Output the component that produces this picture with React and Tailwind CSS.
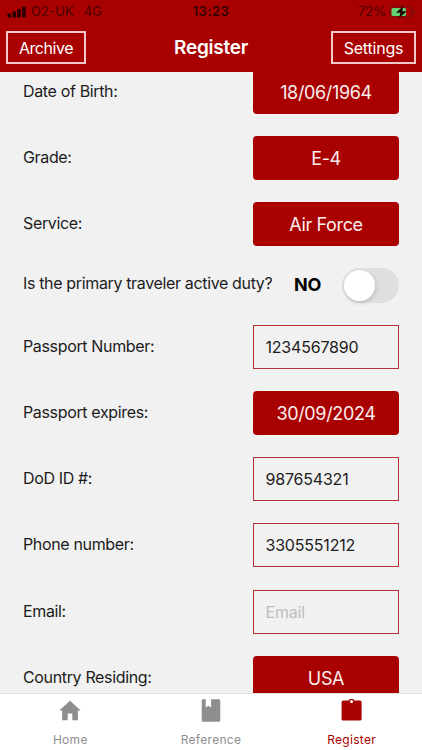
import React, { useState } from 'react';

const fields = [
  { label: 'Date of Birth:', type: 'button', value: '18/06/1964' },
  { label: 'Grade:', type: 'button', value: 'E-4' },
  { label: 'Service:', type: 'button', value: 'Air Force' },
  { label: 'Is the primary traveler active duty?', type: 'switch' },
  { label: 'Passport Number:', type: 'input', value: '1234567890' },
  { label: 'Passport expires:', type: 'button', value: '30/09/2024' },
  { label: 'DoD ID #:', type: 'input', value: '987654321' },
  { label: 'Phone number:', type: 'input', value: '3305551212' },
  { label: 'Email:', type: 'input', value: '', placeholder: 'Email' },
  { label: 'Country Residing:', type: 'button', value: 'USA' },
];

const HomeIcon = () => (
  <svg viewBox="0 0 24 24" className="h-6 w-6" fill="currentColor">
    <path d="M9.700 21.200v-6.700h4.600v6.700h5.600v-9.600h2.800L12 1.800 1.300 11.600h2.800v9.600z" />
  </svg>
);

const BookIcon = () => (
  <svg viewBox="0 0 20 24" className="h-6 w-5" fill="currentColor">
    <path d="M2.200.3H4.700v8.200l2.700-1.800 2.700 1.800V.3h7.700q1.500 0 1.500 1.500v19.400q0 1.500-1.500 1.500H2.200q-1.500 0-1.500-1.500V1.800Q.7.3 2.200.3z" />
  </svg>
);

const ClipboardIcon = () => (
  <svg viewBox="0 0 22 24" className="h-6 w-[22px]" fill="currentColor">
    <path
      fillRule="evenodd"
      d="M2.200 1.500h5.700a2.900 2.900 0 0 1 5.400 0H19q1.600 0 1.600 1.600v16.800q0 1.600-1.600 1.600H2.200Q.6 21.500.6 19.900V3.100Q.6 1.500 2.200 1.500zM10.600 1a1.500 1.500 0 1 0 0 3 1.500 1.500 0 0 0 0-3z"
    />
  </svg>
);

const StatusBar = () => (
  <div className="flex h-6 items-center px-[7px] text-[13px] text-[#4a0000]">
    <div className="flex flex-1 items-center">
      <svg viewBox="0 0 19 12" className="mr-[5px] h-3 w-[19px]" fill="#260000">
        <rect x="0.500" y="7.500" width="3.500" height="4" rx="0.800" />
        <rect x="5.500" y="5.500" width="3.500" height="6" rx="0.800" />
        <rect x="10.300" y="3" width="3.500" height="8.500" rx="0.800" />
        <rect x="15.200" y="0.500" width="3.500" height="11" rx="0.800" />
      </svg>
      <span className="tracking-[0.1px]">O2-UK</span>
      <span className="ml-[10px]">4G</span>
    </div>
    <span className="font-semibold tracking-[0.5px] text-[#330000]">13:23</span>
    <div className="flex flex-1 items-center justify-end">
      <span>72%</span>
      <svg viewBox="0 0 26 14" className="ml-[3px] h-[14px] w-[26px]">
        <rect x="1" y="1.500" width="22" height="11" rx="3" fill="none" stroke="#6b1010" />
        <path d="M24.500 5v4q1.500-.5 1.500-2t-1.500-2z" fill="#6b1010" />
        <rect x="2.500" y="3" width="14.500" height="8" rx="1.500" fill="#5fd273" />
        <path d="M14.500.8 7 7.700h4.600L9.800 13.200 17.700 6.300h-4.600z" fill="#1f0000" />
      </svg>
    </div>
  </div>
);

const Control = ({ field, on, onToggle }) => {
  if (field.type === 'switch') {
    return (
      <div className="flex items-center">
        <span className="mr-[21px] pb-[2px] text-[18px] font-bold tracking-[-0.3px] text-black">
          {on ? 'YES' : 'NO'}
        </span>
        <button
          onClick={onToggle}
          className="flex h-[35px] w-[57px] items-center rounded-full bg-[#dfdfe1] p-[2px]"
        >
          <span className="h-[31px] w-[31px] rounded-full bg-white shadow-[1px_2px_4px_rgba(0,0,0,0.15)]" />
        </button>
      </div>
    );
  }
  if (field.type === 'input') {
    return (
      <input
        defaultValue={field.value}
        placeholder={field.placeholder}
        className="h-11 w-[146px] border border-[#b43236] bg-transparent px-[11.5px] text-[16px] tracking-[-0.2px] text-[#1c1c1c] outline-none placeholder:text-[#bdbdc0]"
      />
    );
  }
  return (
    <button className="h-11 w-[146px] rounded bg-[#a90000] pt-[1px] text-[18px] tracking-[-0.35px] text-[#fbeeee]">
      {field.value}
    </button>
  );
};

const tabs = [
  { name: 'Home', icon: HomeIcon },
  { name: 'Reference', icon: BookIcon },
  { name: 'Register', icon: ClipboardIcon },
];

const App = () => {
  const [activeDuty, setActiveDuty] = useState(false);

  return (
    <div className="flex h-[750px] w-[422px] flex-col overflow-hidden bg-[#f1f1f1] font-['Inter','Liberation_Sans',sans-serif]">
      <header className="h-[72px] shrink-0 bg-[#a90000] text-white">
        <StatusBar />
        <div className="flex items-center px-[6px] pt-[7px]">
          <div className="flex flex-1">
            <button className="h-[33px] w-[80px] border-2 border-[#f0caca] text-[16px] tracking-[-0.45px]">
              Archive
            </button>
          </div>
          <h1 className="pt-[2px] text-[19px] font-semibold tracking-[-0.25px]">Register</h1>
          <div className="flex flex-1 justify-end">
            <button className="h-[33px] w-[85px] border-2 border-[#f0caca] text-[16px] tracking-[-0.2px]">
              Settings
            </button>
          </div>
        </div>
      </header>

      <main className="min-h-0 flex-1 overflow-hidden">
        <div className="-mt-[2px] flex flex-col gap-[22.07px] px-[23px]">
          {fields.map((field) => (
            <div key={field.label} className="flex items-center justify-between text-[16px] text-[#1c1c1c]">
              <span
                className={`whitespace-nowrap tracking-[-0.35px] ${field.type === 'switch' ? 'pb-[5px]' : 'pb-[2px]'}`}
              >
                {field.label}
              </span>
              <Control field={field} on={activeDuty} onToggle={() => setActiveDuty(!activeDuty)} />
            </div>
          ))}
        </div>
      </main>

      <nav className="grid h-[57px] shrink-0 grid-cols-3 border-t border-[#e4e4e4] bg-white">
        {tabs.map(({ name, icon: Icon }) => (
          <button
            key={name}
            className={`flex flex-col items-center pt-[5px] text-[12px] ${
              name === 'Register' ? 'text-[#a90000]' : 'text-[#8e8e90]'
            }`}
          >
            <Icon />
            <span className="mt-[8px] tracking-[0.3px]">{name}</span>
          </button>
        ))}
      </nav>
    </div>
  );
};

export default App;
